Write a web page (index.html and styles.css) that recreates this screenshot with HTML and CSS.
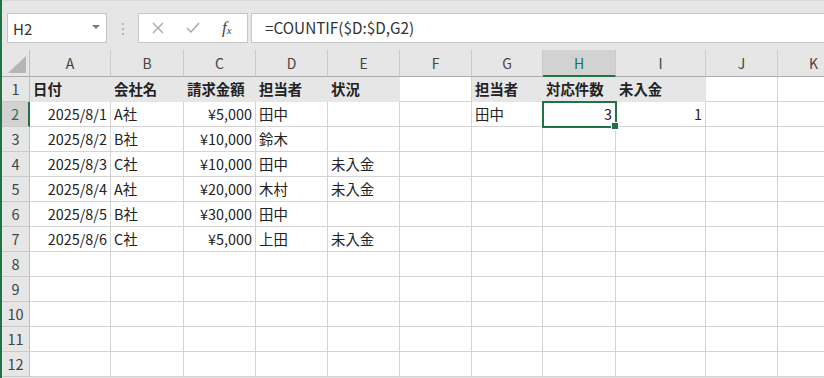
FILE: index.html
```html
<!DOCTYPE html>
<html lang="ja">
<head>
    <meta charset="UTF-8">
    <title>Book1 - Excel</title>
    <link rel="stylesheet" href="styles.css">
</head>
<body>
    <div class="app">
        <div class="formula-row">
            <div class="name-box">
                <span>H2</span>
                <span class="caret"></span>
            </div>
            <div class="grip"><i></i><i></i><i></i></div>
            <div class="fx-buttons">
                <svg class="btn" width="14" height="14" viewBox="0 0 14 14"><path d="M2 2 L12 12 M12 2 L2 12" stroke="#a6a6a6" stroke-width="1.3" fill="none"/></svg>
                <svg class="btn" width="16" height="14" viewBox="0 0 16 14"><path d="M2 7 L6 11 L14 2" stroke="#a6a6a6" stroke-width="1.4" fill="none"/></svg>
                <span class="fx">f<sub>x</sub></span>
            </div>
            <div class="formula">=COUNTIF($D:$D,G2)</div>
        </div>

        <div class="sheet">
            <!-- column headers -->
            <div class="corner"></div>
            <div class="ch">A</div><div class="ch">B</div><div class="ch">C</div><div class="ch">D</div>
            <div class="ch">E</div><div class="ch">F</div><div class="ch">G</div><div class="ch active">H</div>
            <div class="ch">I</div><div class="ch">J</div><div class="ch">K</div>

            <!-- row 1 -->
            <div class="rh">1</div>
            <div class="c fill">日付</div><div class="c fill">会社名</div><div class="c fill">請求金額</div>
            <div class="c fill">担当者</div><div class="c fill">状況</div><div class="c"></div>
            <div class="c fill">担当者</div><div class="c fill">対応件数</div><div class="c fill">未入金</div>
            <div class="c"></div><div class="c"></div>

            <!-- row 2 -->
            <div class="rh active">2</div>
            <div class="c num">2025/8/1</div><div class="c">A社</div><div class="c num">¥5,000</div>
            <div class="c">田中</div><div class="c"></div><div class="c"></div>
            <div class="c">田中</div><div class="c num sel">3</div><div class="c num">1</div>
            <div class="c"></div><div class="c"></div>

            <!-- row 3 -->
            <div class="rh">3</div>
            <div class="c num">2025/8/2</div><div class="c">B社</div><div class="c num">¥10,000</div>
            <div class="c">鈴木</div><div class="c"></div><div class="c"></div>
            <div class="c"></div><div class="c"></div><div class="c"></div><div class="c"></div><div class="c"></div>

            <!-- row 4 -->
            <div class="rh">4</div>
            <div class="c num">2025/8/3</div><div class="c">C社</div><div class="c num">¥10,000</div>
            <div class="c">田中</div><div class="c">未入金</div><div class="c"></div>
            <div class="c"></div><div class="c"></div><div class="c"></div><div class="c"></div><div class="c"></div>

            <!-- row 5 -->
            <div class="rh">5</div>
            <div class="c num">2025/8/4</div><div class="c">A社</div><div class="c num">¥20,000</div>
            <div class="c">木村</div><div class="c">未入金</div><div class="c"></div>
            <div class="c"></div><div class="c"></div><div class="c"></div><div class="c"></div><div class="c"></div>

            <!-- row 6 -->
            <div class="rh">6</div>
            <div class="c num">2025/8/5</div><div class="c">B社</div><div class="c num">¥30,000</div>
            <div class="c">田中</div><div class="c"></div><div class="c"></div>
            <div class="c"></div><div class="c"></div><div class="c"></div><div class="c"></div><div class="c"></div>

            <!-- row 7 -->
            <div class="rh">7</div>
            <div class="c num">2025/8/6</div><div class="c">C社</div><div class="c num">¥5,000</div>
            <div class="c">上田</div><div class="c">未入金</div><div class="c"></div>
            <div class="c"></div><div class="c"></div><div class="c"></div><div class="c"></div><div class="c"></div>

            <!-- rows 8-12 -->
            <div class="rh">8</div>
            <div class="c"></div><div class="c"></div><div class="c"></div><div class="c"></div><div class="c"></div><div class="c"></div>
            <div class="c"></div><div class="c"></div><div class="c"></div><div class="c"></div><div class="c"></div>
            <div class="rh">9</div>
            <div class="c"></div><div class="c"></div><div class="c"></div><div class="c"></div><div class="c"></div><div class="c"></div>
            <div class="c"></div><div class="c"></div><div class="c"></div><div class="c"></div><div class="c"></div>
            <div class="rh">10</div>
            <div class="c"></div><div class="c"></div><div class="c"></div><div class="c"></div><div class="c"></div><div class="c"></div>
            <div class="c"></div><div class="c"></div><div class="c"></div><div class="c"></div><div class="c"></div>
            <div class="rh">11</div>
            <div class="c"></div><div class="c"></div><div class="c"></div><div class="c"></div><div class="c"></div><div class="c"></div>
            <div class="c"></div><div class="c"></div><div class="c"></div><div class="c"></div><div class="c"></div>
            <div class="rh">12</div>
            <div class="c"></div><div class="c"></div><div class="c"></div><div class="c"></div><div class="c"></div><div class="c"></div>
            <div class="c"></div><div class="c"></div><div class="c"></div><div class="c"></div><div class="c"></div>
        </div>
    </div>
</body>
</html>
```

FILE: styles.css
```css
* {
    margin: 0;
    padding: 0;
    box-sizing: border-box;
}

html, body {
    width: 100%;
    height: 100%;
    overflow: hidden;
    background: #e6e6e6;
}

body {
    font-family: "Noto Sans CJK JP", "Noto Sans", sans-serif;
    font-size: 14px;
    color: #222;
}

.app {
    height: 100%;
    border-left: 2px solid #217346;
}

/* formula bar */
.formula-row {
    height: 50px;
    display: flex;
    align-items: flex-start;
    padding: 13px 0 0 5px;
    border-top: 1px solid #d9d9d9;
    background: #e6e6e6;
}

.name-box {
    width: 100px;
    height: 30px;
    margin-top: -1px;
    background: #fff;
    border: 1px solid #c6c6c6;
    display: flex;
    align-items: center;
    justify-content: space-between;
    padding: 0 6px 0 5px;
    font-size: 15px;
    color: #333;
}

.caret {
    width: 0;
    height: 0;
    border-left: 4px solid transparent;
    border-right: 4px solid transparent;
    border-top: 4px solid #7a7a7a;
    margin-bottom: 2px;
}

.grip {
    width: 31px;
    height: 30px;
    display: flex;
    flex-direction: column;
    align-items: center;
    justify-content: center;
    gap: 3px;
}

.grip i {
    width: 2px;
    height: 2px;
    background: #b3b3b3;
}

.fx-buttons {
    width: 110px;
    height: 30px;
    margin-top: -1px;
    background: #fff;
    border: 1px solid #c6c6c6;
    display: flex;
    align-items: center;
    padding-left: 12px;
    gap: 20px;
}

.fx {
    font-family: "Liberation Serif", serif;
    font-style: italic;
    font-size: 17px;
    color: #444;
    margin-left: 1px;
}

.fx sub {
    font-size: 11px;
    vertical-align: -1px;
}

.formula {
    flex: 1;
    height: 30px;
    margin: -1px -2px 0 3px;
    background: #fff;
    border: 1px solid #c6c6c6;
    padding-left: 13px;
    font-size: 15.3px;
    line-height: 26px;
    color: #333;
}

/* grid */
.sheet {
    display: grid;
    grid-template-columns: 28px 81px 73px 72px 72px 72px 72px 71px 73px 90px 72px 72px;
    grid-template-rows: 27px repeat(12, 25px);
    background: #fff;
    overflow: hidden;
}

.corner {
    position: relative;
    background: #e6e6e6;
    border-right: 1px solid #bfbfbf;
    border-bottom: 1px solid #ababab;
}

.corner::after {
    content: "";
    position: absolute;
    right: 3px;
    bottom: 3px;
    width: 18px;
    height: 17px;
    background: #b5b5b5;
    clip-path: polygon(100% 0, 100% 100%, 0 100%);
}

.ch {
    background: #e6e6e6;
    border-right: 1px solid #cacaca;
    border-bottom: 1px solid #ababab;
    text-align: center;
    line-height: 26px;
    color: #444;
}

.ch.active {
    background: #d2d2d2;
    border-bottom: 2px solid #217346;
    color: #217346;
}

.rh {
    background: #e6e6e6;
    border-right: 1px solid #bfbfbf;
    border-bottom: 1px solid #cacaca;
    text-align: center;
    line-height: 24px;
    color: #444;
    font-size: 14.5px;
}

.rh.active {
    background: #d2d2d2;
    border-right: 2px solid #217346;
    color: #217346;
}

.c {
    border-right: 1px solid #d4d4d4;
    border-bottom: 1px solid #d4d4d4;
    padding: 0 3px;
    font-size: 14.4px;
    line-height: 24px;
    white-space: nowrap;
    overflow: hidden;
}

.c.num {
    text-align: right;
}

.c.fill {
    background: #e7e6e6;
    border-color: #e7e6e6;
    font-weight: bold;
}

.c.sel {
    position: relative;
    overflow: visible;
    z-index: 1;
    outline: 2px solid #217346;
    outline-offset: -1px;
}

.c.sel::after {
    content: "";
    position: absolute;
    right: -4px;
    bottom: -4px;
    width: 6px;
    height: 6px;
    background: #217346;
    border: 1px solid #fff;
}
```
